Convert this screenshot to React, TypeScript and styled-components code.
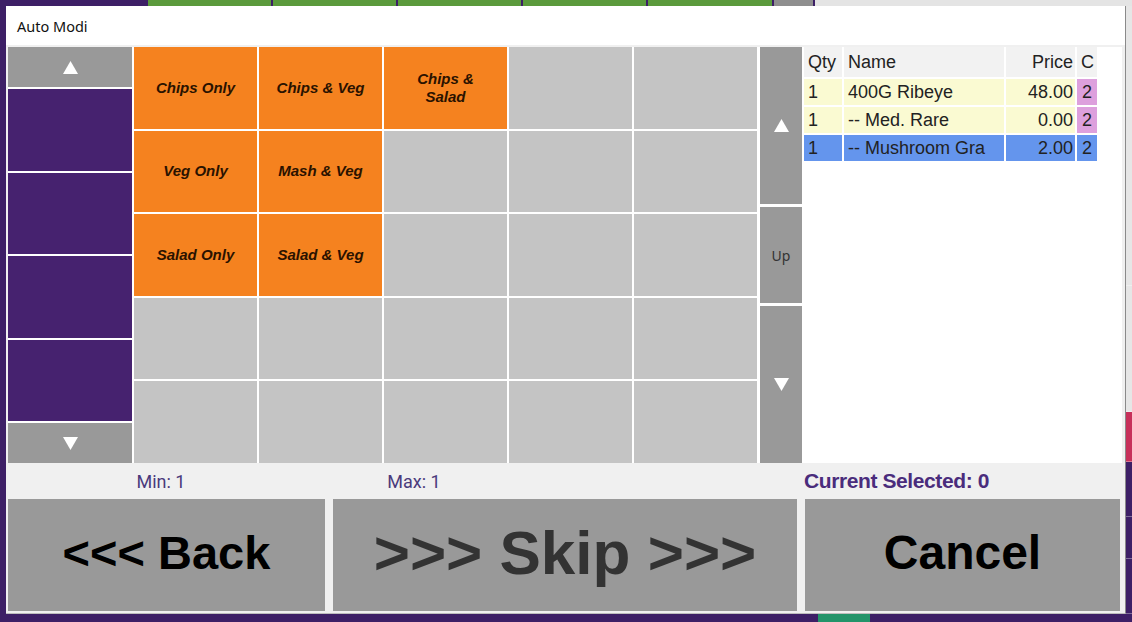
import styled, { createGlobalStyle } from "styled-components";

const GlobalStyle = createGlobalStyle`
    html, body {
        margin: 0;
        padding: 0;
        overflow: hidden;
    }
    * {
        box-sizing: border-box;
    }
`;

const Screen = styled.div`
    position: relative;
    width: 1132px;
    height: 622px;
    background: #3d1f66;
    display: flex;
    flex-direction: column;
    overflow: hidden;
`;

/* ---------- background POS screen (mostly hidden by the dialog) ---------- */
const TopStrip = styled.div`
    height: 6px;
    display: flex;
    gap: 2px;
`;
const StripTile = styled.div<{ $c: string; $w: number }>`
    width: ${(p) => p.$w}px;
    flex: ${(p) => (p.$w ? "none" : "1")};
    background: ${(p) => p.$c};
`;
const ScreenBody = styled.div`
    flex: 1;
    display: flex;
`;
const Filler = styled.div`
    flex: 1;
`;
const RightRail = styled.div`
    width: 7px;
    display: flex;
    flex-direction: column;
`;
const RailTile = styled.div<{ $c: string; $h?: number }>`
    height: ${(p) => (p.$h ? `${p.$h}px` : "auto")};
    flex: ${(p) => (p.$h ? "none" : "1")};
    background: ${(p) => p.$c};
    border-bottom: 1px solid rgba(255, 255, 255, 0.35);
`;
const BottomStrip = styled.div`
    height: 8px;
    display: flex;
    padding-left: 818px;
`;
const GreenChip = styled.div`
    width: 52px;
    background: #23946a;
`;

/* ---------- dialog ---------- */
const Dialog = styled.div`
    position: absolute;
    left: 6px;
    top: 6px;
    width: 1120px;
    height: 608px;
    background: #f0f0f0;
    border-right: 1px solid #8a8a8a;
    border-bottom: 1px solid #bdbdbd;
    display: flex;
    flex-direction: column;
`;
const TitleBar = styled.div`
    height: 39px;
    background: #ffffff;
    display: flex;
    align-items: center;
    padding-left: 11px;
    font-family: "Noto Sans", "Open Sans", sans-serif;
    font-size: 14.5px;
    color: #111;
`;
const Content = styled.div`
    flex: 1;
    display: flex;
    flex-direction: column;
    padding: 2px 3px 2px 2px;
`;
const MainRow = styled.div`
    height: 416px;
    display: flex;
    background: #ffffff;
`;

const SideColumn = styled.div`
    width: 124px;
    display: flex;
    flex-direction: column;
    gap: 2px;
    margin-right: 2px;
`;
const ArrowButton = styled.div<{ $h?: number }>`
    height: ${(p) => (p.$h ? `${p.$h}px` : "auto")};
    flex: ${(p) => (p.$h ? "none" : "1")};
    background: #999999;
    display: flex;
    align-items: center;
    justify-content: center;
    color: #333;
    font-family: "Noto Sans", sans-serif;
    font-size: 14px;
`;
const CategoryButton = styled.div`
    flex: 1;
    background: #46226f;
`;

const ModGrid = styled.div`
    width: 623px;
    display: grid;
    grid-template-columns: repeat(5, 1fr);
    grid-template-rows: repeat(5, 1fr);
    gap: 2px;
    margin-right: 3px;
`;
const ModCell = styled.div<{ $on?: boolean }>`
    background: ${(p) => (p.$on ? "#f5821f" : "#c4c4c4")};
    display: flex;
    align-items: center;
    justify-content: center;
    text-align: center;
    padding: 0 13px;
    font-family: "Liberation Sans", Arial, sans-serif;
    font-weight: bold;
    font-style: italic;
    font-size: 15px;
    line-height: 18px;
    color: #2a1200;
`;

const ScrollColumn = styled.div`
    width: 42px;
    display: flex;
    flex-direction: column;
    gap: 3px;
    margin-right: 2px;
`;

const OrderPanel = styled.div`
    flex: 1;
    background: #ffffff;
    font-family: "Liberation Sans", Arial, sans-serif;
    font-size: 18px;
    color: #222;
`;
const OrderTable = styled.div`
    width: 293px;
    display: grid;
    grid-template-columns: 38px 160px 69px 20px;
    column-gap: 2px;
    row-gap: 2px;
`;
const HeadCell = styled.div<{ $right?: boolean }>`
    height: 30px;
    background: #f2f2f2;
    display: flex;
    align-items: center;
    justify-content: ${(p) => (p.$right ? "flex-end" : "flex-start")};
    padding: 0 2px 0 4px;
`;
const RowCell = styled.div<{ $bg: string; $right?: boolean; $center?: boolean }>`
    height: 26px;
    background: ${(p) => p.$bg};
    display: flex;
    align-items: center;
    justify-content: ${(p) => (p.$center ? "center" : p.$right ? "flex-end" : "flex-start")};
    padding: ${(p) => (p.$center ? "0" : "0 2px 0 4px")};
    white-space: nowrap;
    overflow: hidden;
`;

const LabelRow = styled.div`
    height: 36px;
    display: flex;
    align-items: center;
    font-size: 18px;
    color: #4a3a7c;
`;
const CountLabel = styled.div<{ $w: number }>`
    width: ${(p) => p.$w}px;
    text-align: center;
    font-family: Roboto, "Noto Sans", sans-serif;
`;
const SelectedLabel = styled.div`
    margin-left: 290px;
    font-family: "Liberation Sans", Arial, sans-serif;
    font-weight: bold;
    font-size: 21px;
    letter-spacing: -0.4px;
    color: #4a2c7c;
`;

const ActionRow = styled.div`
    height: 112px;
    display: flex;
    gap: 8px;
`;
const ActionButton = styled.div<{ $w: number; $size: number; $color: string }>`
    width: ${(p) => p.$w}px;
    background: #999999;
    display: flex;
    align-items: center;
    justify-content: center;
    padding-bottom: 6px;
    font-family: "Liberation Sans", Arial, sans-serif;
    font-weight: bold;
    font-size: ${(p) => p.$size}px;
    color: ${(p) => p.$color};
    white-space: nowrap;
`;

function Triangle({ down }: { down?: boolean }) {
    return (
        <svg width="15" height="13" viewBox="0 0 15 13">
            <polygon points={down ? "0,0 15,0 7.5,13" : "7.5,0 15,13 0,13"} fill="#ffffff" />
        </svg>
    );
}

const modifiers: (string | null)[] = [
    "Chips Only", "Chips & Veg", "Chips & Salad", null, null,
    "Veg Only", "Mash & Veg", null, null, null,
    "Salad Only", "Salad & Veg", null, null, null,
    null, null, null, null, null,
    null, null, null, null, null,
];

const orderLines = [
    { qty: "1", name: "400G Ribeye", price: "48.00", c: "2", bg: "#fafad2", cbg: "#dda0dd" },
    { qty: "1", name: "-- Med. Rare", price: "0.00", c: "2", bg: "#fafad2", cbg: "#dda0dd" },
    { qty: "1", name: "-- Mushroom Gra", price: "2.00", c: "2", bg: "#6495ed", cbg: "#6495ed" },
];

function App() {
    return (
        <Screen>
            <GlobalStyle />
            <TopStrip>
                <StripTile $c="#3d1f66" $w={146} />
                <StripTile $c="#5b9a3c" $w={123} />
                <StripTile $c="#5b9a3c" $w={123} />
                <StripTile $c="#5b9a3c" $w={123} />
                <StripTile $c="#5b9a3c" $w={123} />
                <StripTile $c="#5b9a3c" $w={124} />
                <StripTile $c="#8f8f8f" $w={39} />
                <StripTile $c="#e4e4e4" $w={0} />
            </TopStrip>
            <ScreenBody>
                <Filler />
                <RightRail>
                    <RailTile $c="#e6e6e6" $h={280} />
                    <RailTile $c="#e6e6e6" $h={126} />
                    <RailTile $c="#c7305a" $h={50} />
                    <RailTile $c="#3d1f66" $h={55} />
                    <RailTile $c="#3d1f66" $h={42} />
                    <RailTile $c="#3d1f66" />
                </RightRail>
            </ScreenBody>
            <BottomStrip>
                <GreenChip />
            </BottomStrip>

            <Dialog>
                <TitleBar>Auto Modi</TitleBar>
                <Content>
                    <MainRow>
                        <SideColumn>
                            <ArrowButton $h={40}>
                                <Triangle />
                            </ArrowButton>
                            <CategoryButton />
                            <CategoryButton />
                            <CategoryButton />
                            <CategoryButton />
                            <ArrowButton $h={40}>
                                <Triangle down />
                            </ArrowButton>
                        </SideColumn>

                        <ModGrid>
                            {modifiers.map((m, i) => (
                                <ModCell key={i} $on={!!m}>
                                    {m}
                                </ModCell>
                            ))}
                        </ModGrid>

                        <ScrollColumn>
                            <ArrowButton $h={157}>
                                <Triangle />
                            </ArrowButton>
                            <ArrowButton>Up</ArrowButton>
                            <ArrowButton $h={157}>
                                <Triangle down />
                            </ArrowButton>
                        </ScrollColumn>

                        <OrderPanel>
                            <OrderTable>
                                <HeadCell>Qty</HeadCell>
                                <HeadCell>Name</HeadCell>
                                <HeadCell $right>Price</HeadCell>
                                <HeadCell>C</HeadCell>
                                {orderLines.map((l, i) => [
                                    <RowCell key={`q${i}`} $bg={l.bg}>{l.qty}</RowCell>,
                                    <RowCell key={`n${i}`} $bg={l.bg}>{l.name}</RowCell>,
                                    <RowCell key={`p${i}`} $bg={l.bg} $right>{l.price}</RowCell>,
                                    <RowCell key={`c${i}`} $bg={l.cbg} $center>{l.c}</RowCell>,
                                ])}
                            </OrderTable>
                        </OrderPanel>
                    </MainRow>

                    <LabelRow>
                        <CountLabel $w={306}>Min: 1</CountLabel>
                        <CountLabel $w={200}>Max: 1</CountLabel>
                        <SelectedLabel>Current Selected: 0</SelectedLabel>
                    </LabelRow>

                    <ActionRow>
                        <ActionButton $w={317} $size={47} $color="#000">
                            &lt;&lt;&lt; Back
                        </ActionButton>
                        <ActionButton $w={464} $size={62} $color="#333">
                            &gt;&gt;&gt; Skip &gt;&gt;&gt;
                        </ActionButton>
                        <ActionButton $w={315} $size={48} $color="#000">
                            Cancel
                        </ActionButton>
                    </ActionRow>
                </Content>
            </Dialog>
        </Screen>
    );
}

export default App;
